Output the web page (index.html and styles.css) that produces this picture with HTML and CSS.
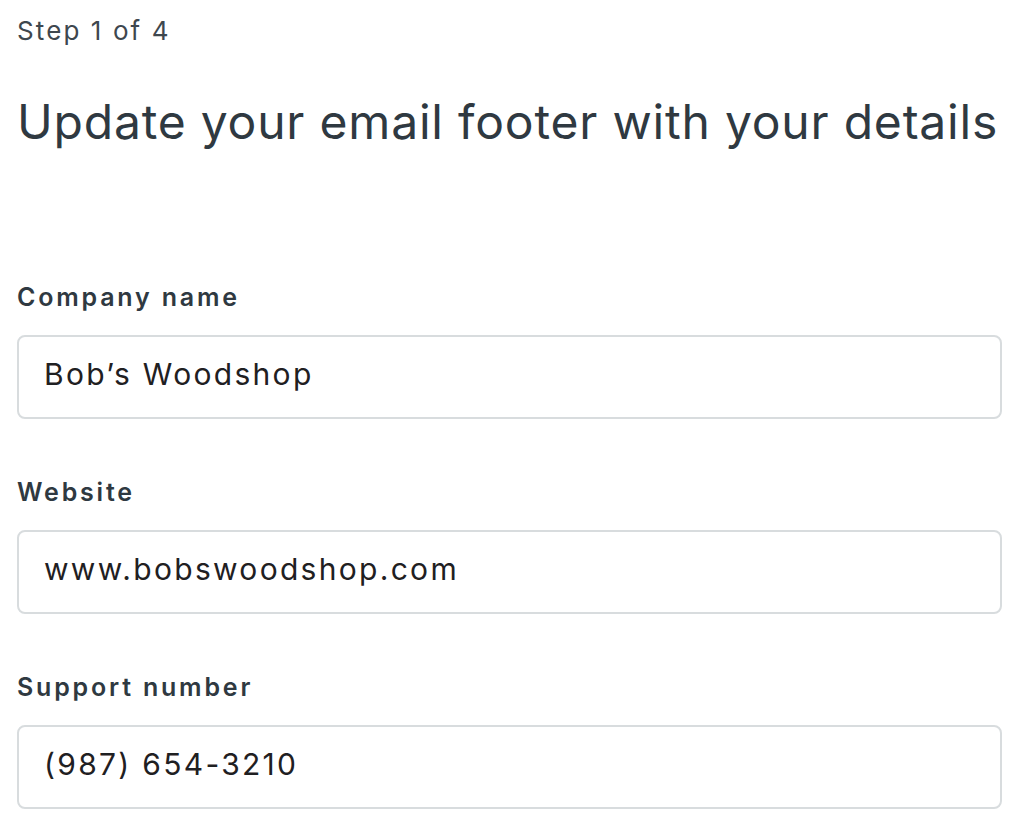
FILE: index.html
```html
<!DOCTYPE html>
<html lang="en">
<head>
<meta charset="utf-8">
<title>Update your email footer</title>
<link rel="stylesheet" href="styles.css">
</head>
<body>
<main class="page">
  <p class="step">Step 1 of 4</p>
  <h1 class="title">Update your email footer with your details</h1>
  <form class="form">
    <div class="field">
      <label class="label" for="company">Company name</label>
      <input class="input" id="company" type="text" value="Bob’s Woodshop">
    </div>
    <div class="field">
      <label class="label" for="website">Website</label>
      <input class="input" id="website" type="text" value="www.bobswoodshop.com">
    </div>
    <div class="field">
      <label class="label" for="support">Support number</label>
      <input class="input" id="support" type="text" value="(987) 654-3210">
    </div>
  </form>
</main>
</body>
</html>
```

FILE: styles.css
```css
html, body {
  margin: 0;
  padding: 0;
  background: #ffffff;
}

body {
  font-family: Inter, "Noto Sans", "Liberation Sans", sans-serif;
  color: #2f3941;
}

.page {
  padding: 13px 14px 0 17px;
}

.step {
  margin: 0;
  font-size: 26px;
  line-height: 36px;
  letter-spacing: 2.1px;
  color: #3e474e;
  font-weight: 400;
}

.title {
  margin: 44px 0 0;
  font-size: 48px;
  line-height: 58px;
  letter-spacing: 0.8px;
  font-weight: 400;
  color: #2f3941;
}

.form {
  display: flex;
  flex-direction: column;
  gap: 57px;
  margin-top: 130px;
}

.field {
  display: flex;
  flex-direction: column;
  gap: 22px;
}

.label {
  font-size: 25px;
  line-height: 32px;
  font-weight: 600;
  letter-spacing: 2.8px;
  color: #2f3941;
}

.input {
  box-sizing: border-box;
  width: 100%;
  height: 84px;
  margin: 0;
  padding: 0 25px 6px;
  border: 2px solid #d8dcde;
  border-radius: 8px;
  font-family: Inter, "Noto Sans", "Liberation Sans", sans-serif;
  font-size: 30px;
  letter-spacing: 2.3px;
  color: #1f2022;
  background: #ffffff;
  outline: none;
}
```
